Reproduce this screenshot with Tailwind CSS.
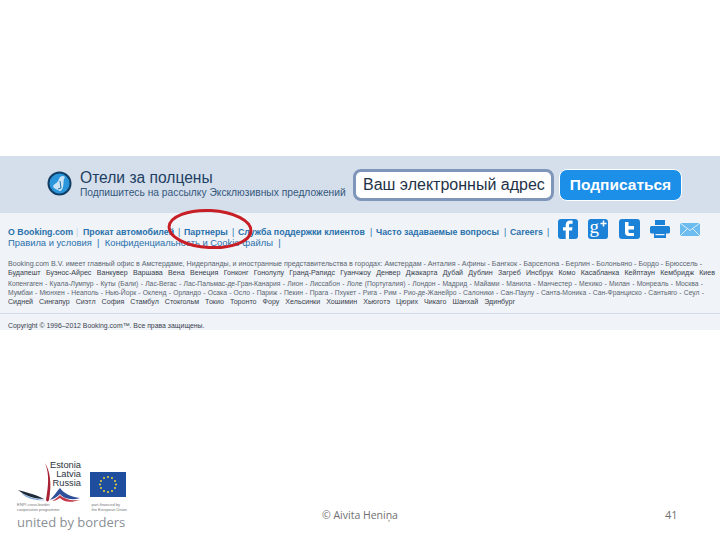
<!DOCTYPE html>
<html lang="en">
<head>
  <meta charset="UTF-8" />
  <title>Slide 41</title>
  <script src="https://cdn.jsdelivr.net/npm/@tailwindcss/browser@4"></script>
</head>
<body class="bg-white">
<div class="relative w-[720px] h-[540px] overflow-hidden flex flex-col pt-[156px] font-['Liberation_Sans',sans-serif]">

  <!-- subscribe band -->
  <div class="h-[57px] bg-[#d5deeb] flex items-center pl-[47px]">
    <svg class="w-[25px] h-[25px] shrink-0 -mt-[3px]" viewBox="0 0 25 25">
      <circle cx="12.5" cy="12.5" r="11" fill="#2a96dc" stroke="#123f66" stroke-width="2"/>
      <path d="M6 15C8 12 11 12 12 8 13 5 16 4 18 6 16 9 17 12 16 16 15 20 13 21 11 19 9 18 7 18 6 15Z" fill="#c9e4f6"/>
      <path d="M13 10L14 17M14 17L11 18" stroke="#1f6fa8" stroke-width="1" fill="none"/>
    </svg>
    <div class="ml-[8px] w-[273px] flex flex-col text-[#1d3f63]">
      <div class="text-[15.6px] leading-[17px] -mt-[2px] whitespace-nowrap">Отели за полцены</div>
      <div class="text-[10.25px] leading-[13px] whitespace-nowrap text-[#34587c]">Подпишитесь на рассылку Эксклюзивных предложений</div>
    </div>
    <div class="w-[201px] h-[32px] bg-white border-[3px] border-[#7f95ba] rounded-[8px] flex items-center pl-[7px] text-[16px] text-[#1e3348] whitespace-nowrap">Ваш электронный адрес</div>
    <div class="ml-[5px] w-[123px] h-[32px] bg-[#1c8fe8] border border-white rounded-[8px] flex items-center justify-center text-[15.5px] font-bold text-white whitespace-nowrap">Подписаться</div>
  </div>

  <!-- booking footer -->
  <div class="h-[117px] bg-[#f0f3f8] flex flex-col">
    <div class="h-[41px] flex pl-[8px]">
      <div class="w-[548px] pt-[14px] text-[8.8px] leading-[11px] font-bold text-[#2a71ab] whitespace-nowrap">
        <div class="flex">
          <span class="w-[68px]">О Booking.com</span>
          <span class="w-[7px] font-normal text-[#c5d3e2]">|</span>
          <span class="w-[95px]">Прокат автомобилей</span>
          <span class="w-[6px] font-normal">|</span>
          <span class="w-[48px]">Партнеры</span>
          <span class="w-[6px] font-normal">|</span>
          <span class="w-[132px]">Служба поддержки клиентов</span>
          <span class="w-[6px] font-normal">|</span>
          <span class="w-[128px]">Часто задаваемые вопросы</span>
          <span class="w-[6px] font-normal">|</span>
          <span class="w-[37px]">Careers</span>
          <span class="font-normal">|</span>
        </div>
        <div class="-mt-[1px] font-normal text-[9.4px]">Правила и условия &nbsp;|&nbsp; Конфиденциальность и Cookie-файлы &nbsp;|</div>
      </div>
      <div class="ml-[2px] pt-[6px] flex items-start gap-[10px]">
        <svg class="w-[20px] h-[20px]" viewBox="0 0 20 20"><rect width="20" height="20" rx="3" fill="#1c82d8"/><path d="M11 20V11.5H14L14.5 8.2H11V6.3C11 5.3 11.4 4.7 12.6 4.7H14.6V1.8C14 1.7 13 1.6 12 1.6 9.4 1.6 7.7 3.2 7.7 5.9V8.2H5V11.5H7.7V20Z" fill="#fff"/></svg>
        <svg class="w-[20px] h-[20px]" viewBox="0 0 20 20"><rect width="20" height="20" rx="3" fill="#1c82d8"/><text x="1.5" y="14" font-size="19" font-family="Liberation Serif, serif" fill="#fff">g</text><path d="M12.5 4.5H18.5M15.5 1.5V7.5" stroke="#fff" stroke-width="1.5"/></svg>
        <svg class="ml-[1px] w-[21px] h-[20px]" viewBox="0 0 21 20"><rect width="21" height="20" rx="3" fill="#1c82d8"/><path d="M6 3H9.5V7H15V10.5H9.5V12.5C9.5 13.6 10 14 11 14H15V17H9.5C7.3 17 6 15.7 6 13.5Z" fill="#fff"/></svg>
        <svg class="w-[20px] h-[20px]" viewBox="0 0 20 20"><rect x="5" y="1" width="10" height="5" fill="#1c82d8"/><rect y="7" width="20" height="7.5" rx="1.5" fill="#1c82d8"/><rect x="4" y="12" width="12" height="7" fill="#1c82d8"/><rect x="5.5" y="15" width="9" height="1.2" fill="#f0f3f8"/></svg>
        <svg class="w-[20px] h-[20px]" viewBox="0 0 20 20"><rect y="4" width="20" height="13" fill="#6cbcf0"/><path d="M0 4L10 11.5L20 4M0 17L7.5 9.5M20 17L12.5 9.5" fill="none" stroke="#d8edfb" stroke-width="1"/></svg>
      </div>
    </div>
    <div class="pl-[8px] pt-[6px] text-[7.1px] leading-[9.4px] text-[#39424c] whitespace-nowrap">
      <div class="w-[690px] [text-align-last:justify] text-[#5a6570]">Booking.com B.V. имеет главный офис в Амстердаме, Нидерланды, и иностранные представительства в городах: Амстердам - Анталия - Афины - Бангкок - Барселона - Берлин - Болоньяно - Бордо - Брюссель -</div>
      <div class="w-[707px] [text-align-last:justify]">Будапешт Буэнос-Айрес Ванкувер Варшава Вена Венеция Гонконг Гонолулу Гранд-Рапидс Гуанчжоу Денвер Джакарта Дубай Дублин Загреб Инсбрук Комо Касабланка Кейптаун Кембридж Киев</div>
      <div class="w-[695px] [text-align-last:justify] text-[#5a6570] text-[6.75px]">Копенгаген - Куала-Лумпур - Куты (Бали) - Лас-Вегас - Лас-Пальмас-де-Гран-Канария - Лион - Лиссабон - Лоле (Португалия) - Лондон - Мадрид - Майами - Манила - Манчестер - Мехико - Милан - Монреаль - Москва -</div>
      <div class="w-[696px] [text-align-last:justify] text-[#5a6570] text-[6.75px]">Мумбаи - Мюнхен - Неаполь - Нью-Йорк - Окленд - Орландо - Осака - Осло - Париж - Пекин - Прага - Пхукет - Рига - Рим - Рио-де-Жанейро - Салоники - Сан-Паулу - Санта-Моника - Сан-Франциско - Сантьяго - Сеул -</div>
      <div class="w-[507px] [text-align-last:justify]">Сидней Сингапур Сиэтл София Стамбул Стокгольм Токио Торонто Фору Хельсинки Хошимин Хьюготэ Цюрих Чикаго Шанхай Эдинбург</div>
    </div>
    <div class="mt-[6px] h-px bg-[#d3dbe6]"></div>
    <div class="pl-[8px] pt-[7px] text-[6.9px] leading-[9px] text-[#39424c] whitespace-nowrap">Copyright © 1996–2012 Booking.com™. Все права защищены.</div>
  </div>

  <!-- slide footer -->
  <div class="mt-auto h-[71px] mb-[8px] flex items-start pl-[17px]">
    <div class="w-[110px] shrink-0 flex flex-col">
      <div class="h-[42px] flex">
        <div class="relative w-[64px] h-[42px]">
          <svg class="w-[64px] h-[42px]" viewBox="0 0 64 42">
            <path d="M1 29C8 31 18 33 27 38 18 38 8 35 1 29Z" fill="#1f2b3a"/>
            <path d="M4 32C11 36 20 39 29 39 20 40 10 38 4 32Z" fill="#6f9ed4"/>
            <path d="M28 2C33 10 35 22 32 39 31 41 30 41 29 39 31 26 33 14 28 2Z" fill="#a82233"/>
            <path d="M33 39C37 35 40 30 43 27 46 32 54 36 63 37 54 40 46 37 43 33 40 36 37 38 33 39Z" fill="#2e4f9a"/>
            <path d="M35 40C39 38 41 36 43 34 47 38 54 40 63 39 54 42 46 41 43 37 40 39 38 40 35 40Z" fill="#c43a4c"/>
          </svg>
          <div class="absolute right-0 top-0 flex flex-col items-end text-[9.3px] leading-[9px] text-[#2b3440] whitespace-nowrap">
            <div>Estonia</div>
            <div>Latvia</div>
            <div>Russia</div>
          </div>
        </div>
        <svg class="ml-[9px] mt-[11px] w-[36px] h-[25px] shrink-0" viewBox="0 0 36 25">
          <rect width="36" height="25" fill="#1f4e9e"/>
          <g fill="#e8d63a">
            <circle cx="18" cy="5" r="1"/><circle cx="22" cy="6" r="1"/><circle cx="25" cy="9" r="1"/><circle cx="26" cy="12.5" r="1"/><circle cx="25" cy="16" r="1"/><circle cx="22" cy="19" r="1"/><circle cx="18" cy="20" r="1"/><circle cx="14" cy="19" r="1"/><circle cx="11" cy="16" r="1"/><circle cx="10" cy="12.5" r="1"/><circle cx="11" cy="9" r="1"/><circle cx="14" cy="6" r="1"/>
          </g>
        </svg>
      </div>
      <div class="flex justify-between text-[4px] leading-[4.5px] text-[#777] whitespace-nowrap">
        <div>ENPI cross-border<br/>cooperation programme</div>
        <div>part-financed by<br/>the European Union</div>
      </div>
      <div class="mt-[1px] text-[13px] leading-[18px] text-[#8a8f96] whitespace-nowrap font-['Open_Sans',sans-serif]">united by borders</div>
    </div>
    <div class="ml-[195px] pt-[46px] w-[343px] text-[10.5px] leading-[16px] text-[#6f6f6f] font-['Open_Sans',sans-serif] whitespace-nowrap">© Aivita Heniņa</div>
    <div class="pt-[46px] text-[11px] leading-[16px] text-[#6f6f6f] font-['Open_Sans',sans-serif]">41</div>
  </div>

  <!-- red hand drawn circle over the links -->
  <svg class="absolute left-[166px] top-[208px] w-[90px] h-[46px]" viewBox="0 0 90 46">
    <ellipse cx="44" cy="21" rx="41" ry="18.5" fill="none" stroke="#c81e25" stroke-width="3" transform="rotate(3 44 21)"/>
  </svg>
</div>
</body>
</html>
